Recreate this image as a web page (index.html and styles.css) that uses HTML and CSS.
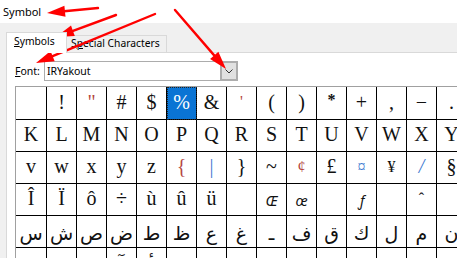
FILE: index.html
```html
<!DOCTYPE html>
<html>
<head>
<meta charset="utf-8">
<title>Symbol</title>
<link rel="stylesheet" href="styles.css">
</head>
<body>
<div class="window">
  <div class="titlebar">Symbol</div>
  <div class="dialog">
    <div class="tabs">
      <div class="tab tab-active"><u>S</u>ymbols</div>
      <div class="tab">S<u>p</u>ecial Characters</div>
    </div>
    <div class="panel">
      <div class="font-row">
        <label class="font-label"><u>F</u>ont:</label>
        <div class="combo">
          <span class="combo-text">IRYakout</span>
          <span class="combo-btn"><svg width="8" height="5" viewBox="0 0 8 5"><polyline points="0.5,0.5 4,4 7.5,0.5" fill="none" stroke="#333" stroke-width="1"/></svg></span>
        </div>
      </div>
      <div class="grid">
        <div class="cell"></div><div class="cell">!</div><div class="cell tint-red">"</div><div class="cell">#</div><div class="cell">$</div><div class="cell cell-sel">%</div><div class="cell">&amp;</div><div class="cell tint-red small">'</div><div class="cell">(</div><div class="cell">)</div><div class="cell bold">*</div><div class="cell">+</div><div class="cell">,</div><div class="cell">−</div><div class="cell">.</div>

        <div class="cell">K</div><div class="cell">L</div><div class="cell">M</div><div class="cell">N</div><div class="cell">O</div><div class="cell">P</div><div class="cell">Q</div><div class="cell">R</div><div class="cell">S</div><div class="cell">T</div><div class="cell">U</div><div class="cell">V</div><div class="cell">W</div><div class="cell">X</div><div class="cell">Y</div>

        <div class="cell">v</div><div class="cell">w</div><div class="cell">x</div><div class="cell">y</div><div class="cell">z</div><div class="cell tint-red">{</div><div class="cell tint-blue">|</div><div class="cell">}</div><div class="cell">~</div><div class="cell tint-red small">¢</div><div class="cell">£</div><div class="cell tint-blue small">¤</div><div class="cell small">¥</div><div class="cell tint-blue italic">/</div><div class="cell">§</div>

        <div class="cell">Î</div><div class="cell">Ï</div><div class="cell">ô</div><div class="cell">÷</div><div class="cell">ù</div><div class="cell">û</div><div class="cell">ü</div><div class="cell"></div><div class="cell alt">Œ</div><div class="cell alt">œ</div><div class="cell"></div><div class="cell alt">ƒ</div><div class="cell"></div><div class="cell small">ˆ</div><div class="cell"></div>

        <div class="cell ar">س</div><div class="cell ar">ش</div><div class="cell ar">ص</div><div class="cell ar">ض</div><div class="cell ar">ط</div><div class="cell ar">ظ</div><div class="cell ar">ع</div><div class="cell ar">غ</div><div class="cell ar">ـ</div><div class="cell ar">ف</div><div class="cell ar">ق</div><div class="cell ar">ك</div><div class="cell ar">ل</div><div class="cell ar">م</div><div class="cell ar">ن</div>

        <div class="cell ar"></div><div class="cell ar">لا</div><div class="cell ar">ا</div><div class="cell ar">آ</div><div class="cell ar">أ</div><div class="cell ar">ء</div><div class="cell ar">ئ</div><div class="cell ar"></div><div class="cell ar"></div><div class="cell ar"></div><div class="cell ar">ؤ</div><div class="cell ar">ة</div><div class="cell ar"></div><div class="cell ar"></div><div class="cell ar"></div>
      </div>
    </div>
  </div>

  <svg class="arrows" width="457" height="258" viewBox="0 0 457 258">
    <g stroke="#f00" stroke-width="2.4" stroke-linecap="round" fill="none">
      <line x1="98" y1="8" x2="64" y2="11.3"/>
      <line x1="116" y1="15" x2="73" y2="30.8"/>
      <line x1="155" y1="14" x2="52.6" y2="56.1"/>
      <line x1="175" y1="10" x2="214.2" y2="55.4"/>
    </g>
    <g fill="#f00">
      <polygon points="47,13 64.4,5.8 65.5,16.7"/>
      <polygon points="56,37 71,25.6 74.8,36"/>
      <polygon points="36,63 50.5,51.1 54.7,61.2"/>
      <polygon points="226,69 210.1,59 218.4,51.8"/>
    </g>
  </svg>
</div>
</body>
</html>
```

FILE: styles.css
```css
* {
  box-sizing: border-box;
}

html,
body {
  margin: 0;
  padding: 0;
}

body {
  width: 457px;
  height: 258px;
  overflow: hidden;
  background: #f0f0f0;
  font-family: "Noto Sans", sans-serif;
  color: #000;
}

.window {
  position: relative;
  width: 457px;
  height: 258px;
  overflow: hidden;
}

.titlebar {
  height: 23px;
  background: #fff;
  font-size: 11px;
  line-height: 23px;
  padding-left: 3px;
}

.dialog {
  padding: 9px 0 0 6px;
}

.tabs {
  display: flex;
  align-items: flex-end;
  height: 20px;
  font-size: 10.3px;
}

.tab {
  width: 101px;
  height: 17px;
  margin-left: -1px;
  padding-left: 4px;
  border: 1px solid #d9d9d9;
  border-bottom: 0;
  background: #f0f0f0;
  line-height: 14px;
  white-space: nowrap;
}

.tab-active {
  width: 61px;
  height: 21px;
  margin-left: 0;
  margin-bottom: -1px;
  padding-left: 7px;
  background: #fff;
  line-height: 17px;
  position: relative;
  z-index: 1;
}

.tab u,
.font-label u {
  text-underline-offset: 1px;
}

.panel {
  height: 300px;
  background: #fff;
  border-top: 1px solid #d9d9d9;
  border-left: 1px solid #d9d9d9;
  padding: 8px 0 0 8px;
}

.font-row {
  display: flex;
  align-items: center;
  height: 20px;
}

.font-label {
  width: 29px;
  font-size: 10.5px;
}

.combo {
  display: flex;
  align-items: stretch;
  width: 194px;
  height: 20px;
  border: 1px solid #acacac;
  background: #fff;
}

.combo-text {
  flex: 1;
  padding-left: 2px;
  font-size: 10.5px;
  line-height: 18px;
}

.combo-btn {
  width: 18px;
  margin: -1px -1px -1px 0;
  border: 2px solid #adadad;
  background: #e1e1e1;
  display: flex;
  align-items: center;
  justify-content: center;
}

.combo-btn svg {
  display: block;
}

.grid {
  margin-top: 5px;
  display: grid;
  grid-template-columns: 31px repeat(14, 30px);
  grid-template-rows: 33px repeat(5, 32px);
  width: max-content;
  border-top: 1px solid #a0a0a0;
  border-left: 1px solid #a0a0a0;
}

.cell {
  border-right: 1px solid #000;
  border-bottom: 1px solid #000;
  display: flex;
  align-items: center;
  justify-content: center;
  padding-bottom: 2px;
  font-family: "Liberation Serif", serif;
  font-size: 20px;
  color: #111;
}

.cell-sel {
  background: #0a74d4;
  color: #fff;
  outline: 1px dotted #222;
  outline-offset: -1px;
}

.tint-red {
  color: #b4473f;
}

.tint-blue {
  color: #3f7bd0;
}

.small {
  font-size: 16px;
}

.bold {
  font-weight: bold;
  font-size: 16px;
  padding-bottom: 6px;
}

.italic {
  font-style: italic;
}

.alt {
  font-family: "Noto Sans", sans-serif;
  font-style: italic;
  font-size: 14px;
  padding-bottom: 0;
  padding-top: 2px;
}

.ar {
  font-family: "DejaVu Sans", sans-serif;
  font-size: 19px;
  padding-bottom: 0;
  padding-top: 3px;
}

.arrows {
  position: absolute;
  left: 0;
  top: 0;
  pointer-events: none;
}
```
